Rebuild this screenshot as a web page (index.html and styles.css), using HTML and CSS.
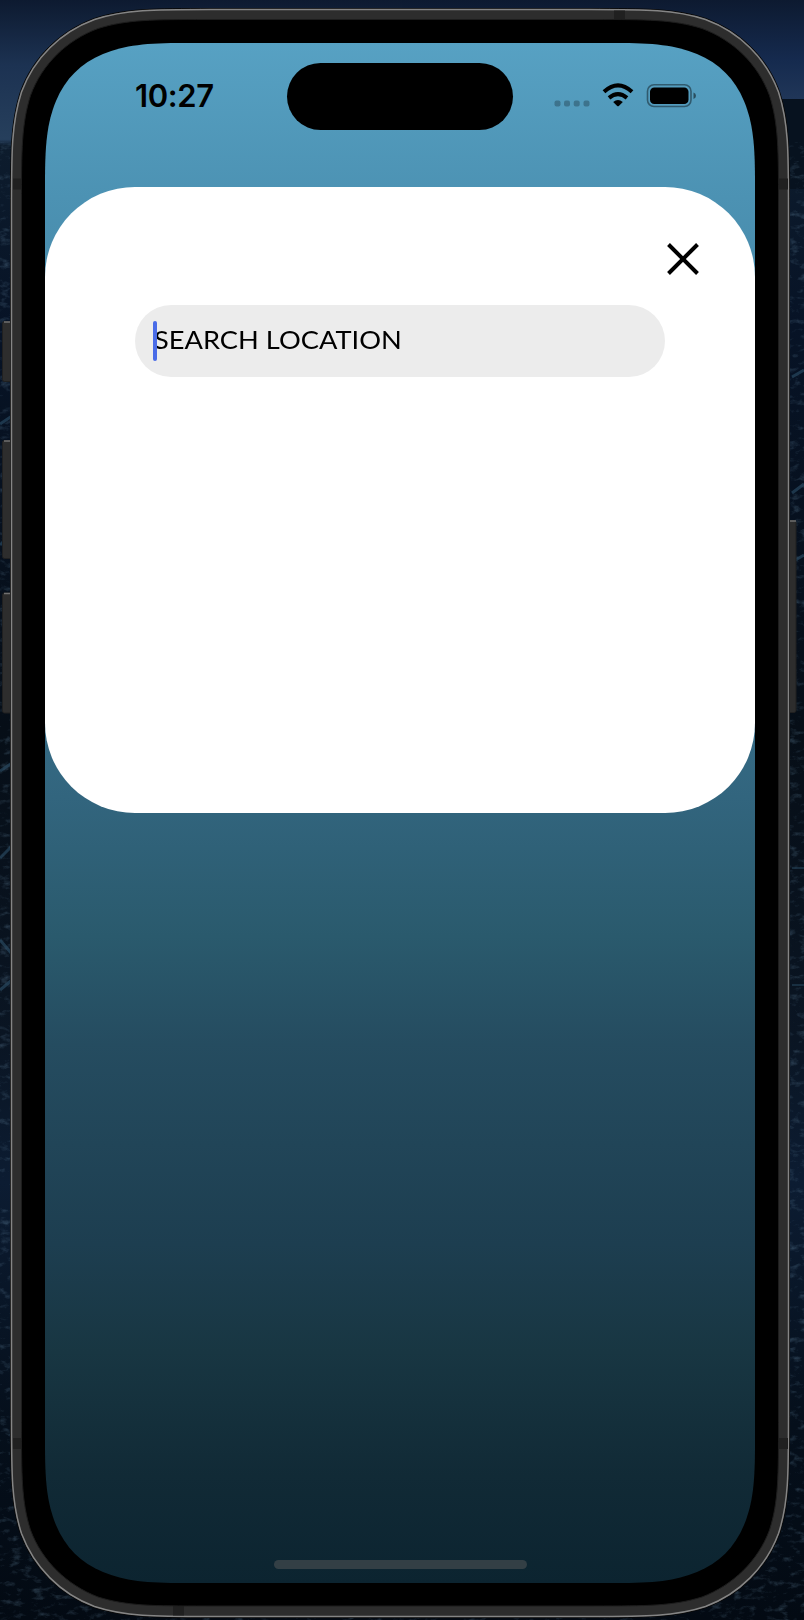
FILE: index.html
```
<!DOCTYPE html>
<html lang="en">
<head>
<meta charset="utf-8">
<title>Search location</title>
<link rel="stylesheet" href="styles.css">
</head>
<body>
<div class="desktop">
  <svg class="shell" width="804" height="1620" viewBox="0 0 804 1620" aria-hidden="true">
    <defs>
      <linearGradient id="sea" x2="0" y2="1">
        <stop offset="0" stop-color="#0d1a30"/><stop offset=".04" stop-color="#1c3252"/><stop offset=".086" stop-color="#263f5c"/><stop offset=".09" stop-color="#0d1c2d"/><stop offset=".2" stop-color="#071326"/><stop offset=".45" stop-color="#060e17"/><stop offset=".64" stop-color="#0a1523"/><stop offset=".73" stop-color="#0c1c32"/><stop offset=".88" stop-color="#050f1b"/><stop offset="1" stop-color="#030a13"/>
      </linearGradient>
      <linearGradient id="sky" x2="0" y2="1">
        <stop offset="0" stop-color="#0d1a30"/><stop offset=".6" stop-color="#152a4e"/><stop offset="1" stop-color="#203658"/>
      </linearGradient>
      <linearGradient id="screen" x2="0" y2="1">
        <stop offset="0" stop-color="#57a1c3"/><stop offset=".1" stop-color="#4c92b3"/><stop offset=".49" stop-color="#32657e"/><stop offset=".58" stop-color="#2a5a6d"/><stop offset=".65" stop-color="#254c60"/><stop offset=".78" stop-color="#1d3e50"/><stop offset=".85" stop-color="#183642"/><stop offset=".93" stop-color="#112a36"/><stop offset="1" stop-color="#0c2430"/>
      </linearGradient>
      <filter id="grain" x="0" y="0" width="100%" height="100%">
        <feTurbulence type="fractalNoise" baseFrequency=".09 .16" numOctaves="4" seed="8"/>
        <feColorMatrix values="0 0 0 0 .14  0 0 0 0 .26  0 0 0 0 .38  1.5 0 0 0 -.8"/>
      </filter>
    </defs>
    <rect width="804" height="1620" fill="url(#sea)"/>
    <rect x="402" width="402" height="99" fill="url(#sky)"/><rect x="402" y="99" width="402" height="90" fill="#07121f"/>
    <rect y="142" width="804" height="1478" filter="url(#grain)" opacity=".6"/>
    <g fill="none" stroke="#2d5069" stroke-width="3" opacity=".6">
      <path d="M0 424l12-8M0 545l12-12M0 771l12-8M0 858l12-12M0 940l12 14M0 990l12-10M792 377l12-7M792 493l12-9M792 562l12-7"/>
      <path d="M792 868h12M792 985h12" stroke-width="1.500"/>
    </g>
    <g fill="#2d2d2d" stroke="#202020">
      <rect x="2.500" y="321.500" width="12" height="60" rx="2"/><rect x="2.500" y="440.500" width="12" height="118" rx="2"/><rect x="2.500" y="593" width="12" height="120" rx="2"/><rect x="784" y="520.500" width="12" height="192" rx="2"/>
    </g>
    <path d="M4 322h8M4 441h8M4 593.500h8M789 521h7" stroke="#6f6f6f" stroke-width="1.500"/>
    <path fill="#2d2d2d" stroke="#080808" stroke-width="1" d="M211 8.500H589C647 8.500 675 8.500 706 18.500C740 31 767 57 779.500 91.500C789.500 123 789.500 151 789.500 209V1416.500C789.500 1474.500 789.500 1503 779.500 1534C767 1568 740 1595 706 1607.500C675 1617.500 647 1617.500 589 1617.500H211C153 1617.500 125 1617.500 94 1607.500C60 1595 33 1568 20.500 1534C10.500 1503 10.500 1474.500 10.500 1416.500V209C10.500 151 10.500 123 20.500 91.500C33 57 60 31 94 18.500C125 8.500 153 8.500 211 8.500Z"/>
    <path fill="none" stroke="#858585" stroke-width="1.500" d="M211 9.500H589C647 9.500 675 9.500 705.500 19.500C739.500 32 766 58 778.500 92C788.500 123 788.500 151 788.500 209V1416.500C788.500 1474.500 788.500 1503 778.500 1533.500C766 1567 739.500 1594 705.500 1606.500C675 1616.500 647 1616.500 589 1616.500H211C153 1616.500 125 1616.500 94.500 1606.500C60.500 1594 34 1567 21.500 1533.500C11.500 1503 11.500 1474.500 11.500 1416.500V209C11.500 151 11.500 123 21.500 92C34 58 60.500 32 94.500 19.500C125 9.500 153 9.500 211 9.500Z"/>
    <g fill="#202020"><rect x="614" y="10.500" width="11" height="10"/><rect x="173" y="1606" width="11" height="9.500"/><rect x="13" y="178.500" width="10" height="11"/><rect x="778" y="178.500" width="10" height="11"/><rect x="13" y="1438" width="10" height="11"/><rect x="778" y="1438" width="10" height="11"/></g>
    <path stroke="#1d1d1d" d="M206 19.500H594C647 19.500 673 19.500 702 28.500C733 40 758 64 769.500 95.500C778.500 124 778.500 150 778.500 203V1422.500C778.500 1475.500 778.500 1502 769.500 1530C758 1561 733 1585 702 1597C673 1606 647 1606 594 1606H206C153 1606 127 1606 98 1597C67 1585 42 1561 30.500 1530C21.500 1502 21.500 1475.500 21.500 1422.500V203C21.500 150 21.500 124 30.500 95.500C42 64 67 40 98 28.500C127 19.500 153 19.500 206 19.500Z"/>
    <path fill="url(#screen)" d="M185 43H615C654 43 675 45 697 54C719 63 735 79 744 101C753 123 755 144 755 183V1443C755 1482 753 1503 744 1525C735 1547 719 1563 697 1572C675 1581 654 1583 615 1583H185C146 1583 125 1581 103 1572C81 1563 65 1547 56 1525C47 1503 45 1482 45 1443V183C45 144 47 123 56 101C65 79 81 63 103 54C125 45 146 43 185 43Z"/>
  </svg>
  <main class="app">
    <header class="status">
      <time class="clock">10:27</time>
      <span class="island"></span>
      <svg class="indicators" width="144" height="30" viewBox="0 0 144 30">
        <g opacity=".25"><rect x=".5" y="18.500" width="6" height="6" rx="2"/><rect x="10" y="18.500" width="6" height="6" rx="2"/><rect x="19.700" y="18.500" width="6" height="6" rx="2"/><rect x="29.500" y="18.500" width="6" height="6" rx="2"/></g>
        <g fill="none" stroke="#000" stroke-width="4"><path d="M50 9.800Q64 -3 78 9.800"/><path d="M55 15.900Q64 8.400 73 15.900"/></g>
        <path d="M59.200 19.900Q64 16 68.800 19.900L64.800 24Q64 24.700 63.200 24Z"/>
        <rect x="93.500" y="2.700" width="43.500" height="21.800" rx="6.500" fill="none" stroke="#000" stroke-opacity=".42" stroke-width="1.600"/><rect x="96" y="5.500" width="38.500" height="16.500" rx="4.300"/><path d="M139.500 10.500Q142 11.500 142 13.700T139.500 17Z" opacity=".5"/>
      </svg>
    </header>
    <section class="card">
      <button class="close" aria-label="Close"><svg width="32" height="32" viewBox="0 0 32 32"><path d="M1.500 1.500l29 29M30.500 1.500l-29 29" stroke="#000" stroke-width="4"/></svg></button>
      <div class="search"><span class="caret"></span><span class="label">SEARCH LOCATION</span></div>
    </section>
    <div class="home"></div>
  </main>
</div>
</body>
</html>
```
FILE: styles.css
```
body { margin: 0; background: #07111d; }
.desktop { display: grid; width: 804px; height: 1620px; overflow: hidden; }
.shell, .app { grid-area: 1 / 1; }
.app { z-index: 1; display: flex; flex-direction: column; box-sizing: border-box; width: 710px; height: 1540px; margin: 43px 0 0 45px; }
.status { display: flex; height: 144.400px; flex: none; align-items: flex-start; }
.clock { width: 151px; padding-left: 90px; margin-right: 1px; margin-top: 35px; font: 600 31px/36px Inter, sans-serif; letter-spacing: -.4px; }
.island { width: 226px; height: 67px; margin-top: 20px; border-radius: 34px; background: #000; }
.indicators { margin: 39px 0 0 41px; }
.card { display: flex; flex-direction: column; box-sizing: border-box; height: 625.600px; padding: 56px 54px 0 90px; border-radius: 90px; background: #fff; }
.close { align-self: flex-end; padding: 0; border: 0; background: none; width: 34px; height: 32px; }
.close svg { display: block; }
.search { display: flex; align-items: center; box-sizing: border-box; width: 530px; height: 72px; margin-top: 29.600px; padding-left: 18px; border-radius: 36px; background: #ececec; }
.caret { z-index: 1; width: 4px; height: 40px; border-radius: 2px; background: #4a6ce8; }
.label { margin: -3px 0 0 -3px; font: 400 25px/32px Lato, sans-serif; white-space: nowrap; transform: scaleX(1.09); transform-origin: left; }
.home { width: 253px; height: 9px; margin: auto auto 14px 229px; border-radius: 5px; background: #333f45; }
```
